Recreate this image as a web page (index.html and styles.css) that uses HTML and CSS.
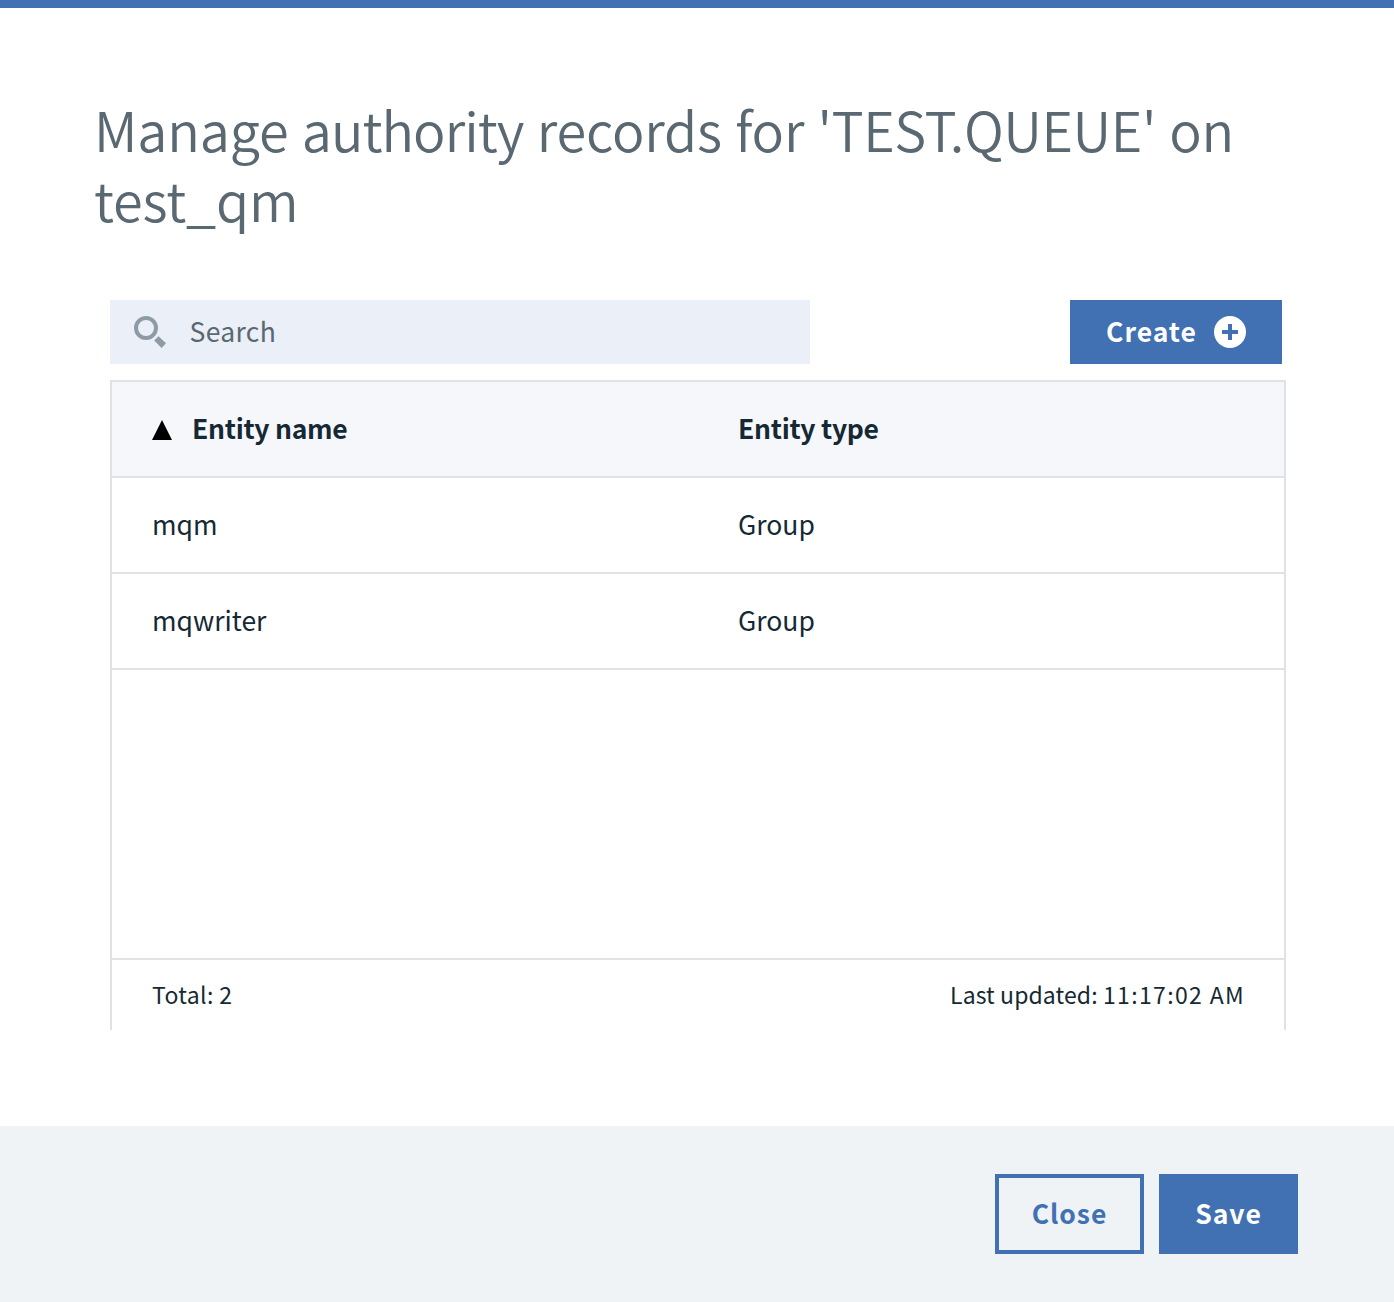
FILE: index.html
```html
<!DOCTYPE html>
<html lang="en">
<head>
<meta charset="utf-8">
<title>Manage authority records</title>
<link rel="stylesheet" href="styles.css">
</head>
<body>
<div class="dialog">
  <main class="content">
    <h1 class="title">Manage <span class="tight">authority</span> records for <span class="object">'TEST.QUEUE'</span> on<br>test_qm</h1>
    <div class="toolbar">
      <label class="search">
        <svg class="search-icon" width="34" height="34" viewBox="0 0 34 34" aria-hidden="true">
          <circle cx="13" cy="13" r="10" fill="none" stroke="#8c9ba5" stroke-width="4"/>
          <path d="M25.5 21.2 33 28.2 28.6 33 21.2 25.5Z" fill="#8c9ba5"/>
        </svg>
        <span class="search-text">Search</span>
      </label>
      <button class="btn create" type="button"><span>Create</span>
        <svg width="32" height="32" viewBox="0 0 32 32" aria-hidden="true">
          <circle cx="16" cy="16" r="16" fill="#fff"/>
          <path d="M14 8h4v6h6v4h-6v6h-4v-6H8v-4h6Z" fill="#4171b2"/>
        </svg>
      </button>
    </div>
    <section class="table">
      <div class="row head">
        <div class="cell"><svg class="sort" width="20" height="20" viewBox="0 0 20 20" aria-hidden="true"><path d="M10 0 20 20H0Z"/></svg><span>Entity name</span></div>
        <div class="cell">Entity type</div>
      </div>
      <div class="row"><div class="cell">mqm</div><div class="cell">Group</div></div>
      <div class="row"><div class="cell">mqwriter</div><div class="cell">Group</div></div>
      <div class="summary"><span class="total">Total: 2</span><span class="updated">Last updated: <span class="time">11:17:02 AM</span></span></div>
    </section>
  </main>
  <footer class="actions">
    <button class="btn close" type="button">Close</button>
    <button class="btn save" type="button">Save</button>
  </footer>
</div>
</body>
</html>
```

FILE: styles.css
```css
* { box-sizing: border-box; }
body {
  margin: 0;
  background: #fff;
  color: #152935;
  font-family: "Noto Sans CJK SC", "Noto Sans", sans-serif;
  font-size: 26.5px;
}
.dialog {
  display: flex;
  flex-direction: column;
  height: 1302px;
  border-top: 8px solid #4171b2;
}
.content { flex: 1; padding: 86px 95px 0; }
.title {
  margin: 0 0 0 -1px;
  height: 206px;
  color: #5a6872;
  font-size: 54px;
  font-weight: 350;
  line-height: 70px;
  letter-spacing: -0.13px;
  word-spacing: 1.3px;
  white-space: nowrap;
}
.tight { letter-spacing: -0.95px; }
.object { letter-spacing: -0.45px; }
.toolbar {
  display: flex;
  justify-content: space-between;
  margin: 0 17px 16px 15px;
}
.search {
  display: flex;
  align-items: center;
  width: 700px;
  height: 64px;
  padding-left: 23px;
  background: #ebeff8;
  color: #5a6872;
}
.search-text {
  margin-left: 22.5px;
  padding-bottom: 3px;
  letter-spacing: 0.35px;
}
.btn {
  display: flex;
  align-items: center;
  justify-content: center;
  padding: 0;
  border: 0;
  background: #4171b2;
  color: #fff;
  font-family: inherit;
  font-size: 26.5px;
  font-weight: 600;
  letter-spacing: 1px;
}
.create { width: 212px; height: 64px; gap: 17px; }
.create span { padding-bottom: 3px; }
.table {
  display: flex;
  flex-direction: column;
  width: 1176px;
  height: 650px;
  margin-left: 15px;
  border: solid #dfe3e6;
  border-width: 2px 2px 0;
}
.row {
  display: grid;
  grid-template-columns: 1fr 1fr;
  height: 96px;
  border-bottom: 2px solid #dfe3e6;
}
.head {
  background: #f5f7fb;
  font-weight: 700;
  letter-spacing: -0.27px;
}
.cell {
  display: flex;
  align-items: center;
  padding: 0 40px 3px;
}
.sort { margin: 5px 20px 0 0; fill: #000; }
.summary {
  display: flex;
  align-items: center;
  justify-content: space-between;
  height: 72px;
  margin-top: auto;
  padding: 0 39px 2px 40px;
  border-top: 2px solid #dfe3e6;
  font-size: 23px;
  white-space: nowrap;
}
.total { letter-spacing: 0.35px; }
.updated { letter-spacing: 0.1px; }
.time { letter-spacing: 1.35px; }
.actions {
  display: flex;
  justify-content: flex-end;
  gap: 15px;
  height: 176px;
  padding: 48px 96px;
  background: #eff3f6;
}
.close {
  width: 149px;
  height: 80px;
  padding-bottom: 3px;
  border: 4px solid #4171b2;
  background: transparent;
  color: #4171b2;
}
.save { width: 139px; height: 80px; padding-bottom: 3px; }
```
